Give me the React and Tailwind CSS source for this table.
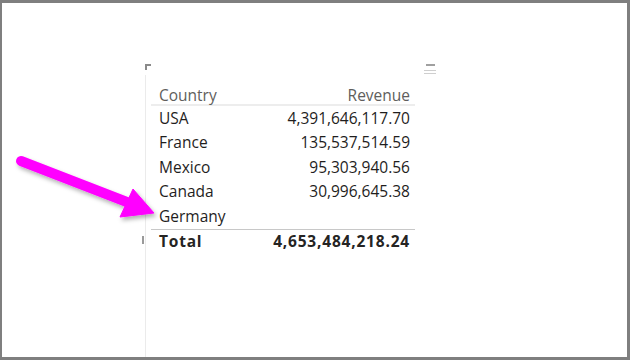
import React from 'react'

const rows = [
  { country: "USA", revenue: "4,391,646,117.70" },
  { country: "France", revenue: "135,537,514.59" },
  { country: "Mexico", revenue: "95,303,940.56" },
  { country: "Canada", revenue: "30,996,645.38" },
  { country: "Germany", revenue: "" },
];

function Arrow() {
  return (
    <svg className="absolute left-0 top-0 pointer-events-none" width="630" height="360" viewBox="0 0 630 360">
      <defs>
        <filter id="shadow" x="-20%" y="-20%" width="140%" height="160%">
          <feDropShadow dx="2" dy="3" stdDeviation="2" floodColor="#000" floodOpacity="0.3" />
        </filter>
      </defs>
      <g filter="url(#shadow)" fill="#ff00ff" stroke="#ff00ff">
        <line x1="21" y1="161" x2="132" y2="204" strokeWidth="10" strokeLinecap="round" />
        <polygon points="154,213 133,189 120,217" strokeWidth="1" strokeLinejoin="round" />
      </g>
    </svg>
  );
}

export default function App() {
  return (
    <div className="relative w-[630px] h-[360px] bg-white" style={{ fontFamily: '"Open Sans", "Noto Sans", sans-serif' }}>
      <div className="w-full h-full border-[3px] border-[#7f7f7f] border-l-[2px] flex">
        <div className="ml-[143px] pt-[61px] w-[292px] flex flex-col">
          {/* visual header: corner grip + menu */}
          <div className="flex justify-between items-start h-[11px]">
            <div className="relative w-[6px] h-[6px]">
              <div className="absolute left-0 top-0 w-[6px] h-[2px] bg-[#8a8a8a]" />
              <div className="absolute left-0 top-0 w-[2px] h-[6px] bg-[#8a8a8a]" />
            </div>
            <div className="flex flex-col items-center w-[12px] mr-[1px]">
              <div className="w-[9px] h-[2px] bg-[#a0a0a0]" />
              <div className="w-[12px] h-[1px] bg-[#cfcfcf] mt-[4px]" />
              <div className="w-[12px] h-[1px] bg-[#cfcfcf] mt-[2px]" />
            </div>
          </div>

          <div className="flex-1 border-l border-[#ebebeb] relative">
            <div className="w-[264px] ml-[5px] mt-[12px]">
              <div className="flex justify-between items-center h-[19px] px-[8px] text-[15.5px] text-[#605e5c] border-b-2 border-[#ededed] pr-[5px]">
                <span>Country</span>
                <span>Revenue</span>
              </div>
              {rows.map((r) => (
                <div key={r.country} className="flex justify-between items-center h-[24.5px] pl-[8px] pr-[5px] text-[15.5px] text-[#1f1e1d]">
                  <span>{r.country}</span>
                  <span>{r.revenue}</span>
                </div>
              ))}
              <div className="flex justify-between items-center h-[25px] pl-[8px] pr-[5px] text-[15.5px] font-bold text-[#252423] border-t border-[#c8c8c8] tracking-[0.8px]">
                <span>Total</span>
                <span>4,653,484,218.24</span>
              </div>
            </div>
            <div className="absolute left-[-4px] top-[161px] w-[2px] h-[8px] bg-[#9a9a9a]" />
          </div>
        </div>
      </div>
      <Arrow />
    </div>
  );
}
